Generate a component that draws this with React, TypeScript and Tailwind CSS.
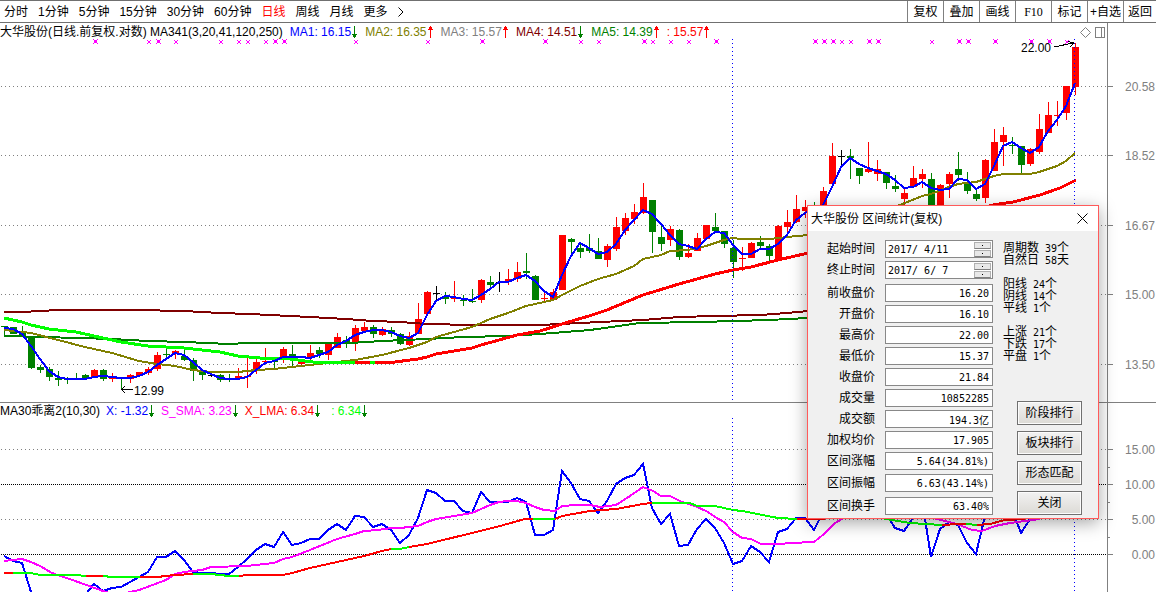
import { useState } from 'react';

type Candle = ['r' | 'g' | 'k', number, number, number, number];

const STEP = 9;
const candleColor = { r: '#ff0000', g: '#008000', k: '#000000' };

// kind, high, body top, body bottom, low
const candles: Candle[] = [
  ['g', 326, 326, 327, 336], ['g', 327, 327, 334, 334], ['g', 326, 333, 336, 337], ['g', 336, 336, 368, 369],
  ['g', 365, 367, 370, 373], ['g', 367, 369, 377, 381], ['g', 371, 378, 380, 386], ['g', 377, 379, 380, 384],
  ['g', 373, 379, 380, 380], ['g', 374, 375, 379, 380], ['r', 369, 370, 377, 378], ['g', 369, 370, 379, 381],
  ['r', 373, 378, 379, 382], ['g', 378, 378, 379, 390], ['r', 374, 375, 379, 383], ['r', 372, 372, 376, 376],
  ['r', 367, 369, 373, 375], ['r', 352, 355, 369, 371], ['g', 348, 354, 355, 357], ['r', 350, 351, 354, 359],
  ['g', 350, 356, 360, 361], ['g', 358, 360, 371, 381], ['g', 370, 372, 375, 380], ['k', 374, 375, 376, 377],
  ['g', 374, 375, 380, 382], ['g', 374, 378, 380, 382], ['r', 368, 376, 378, 380], ['r', 358, 376, 377, 388],
  ['r', 358, 362, 369, 374], ['r', 348, 361, 362, 363], ['g', 359, 361, 362, 368], ['r', 347, 349, 358, 363],
  ['g', 345, 354, 357, 366], ['r', 359, 360, 364, 365], ['r', 345, 353, 358, 362], ['g', 347, 350, 354, 358],
  ['r', 343, 343, 355, 360], ['r', 333, 337, 348, 348], ['g', 336, 340, 343, 348], ['r', 325, 328, 342, 351],
  ['r', 322, 327, 331, 331], ['g', 325, 327, 334, 338], ['r', 327, 329, 335, 336], ['g', 327, 330, 334, 337],
  ['g', 333, 334, 344, 345], ['r', 332, 336, 345, 346], ['r', 303, 319, 334, 334], ['r', 291, 292, 314, 314],
  ['k', 286, 293, 294, 300], ['g', 292, 296, 299, 304], ['r', 281, 297, 299, 302], ['g', 295, 300, 301, 306],
  ['g', 289, 301, 302, 303], ['r', 279, 280, 300, 303], ['g', 276, 282, 285, 288], ['k', 272, 282, 283, 292],
  ['r', 269, 279, 282, 285], ['r', 262, 272, 279, 282], ['g', 253, 271, 273, 279], ['g', 275, 276, 300, 300],
  ['r', 290, 298, 299, 302], ['r', 289, 292, 300, 300], ['r', 235, 235, 290, 290], ['g', 238, 239, 242, 253],
  ['g', 244, 248, 252, 258], ['g', 234, 248, 251, 253], ['g', 238, 251, 259, 259], ['r', 244, 246, 260, 267],
  ['r', 217, 227, 249, 251], ['r', 213, 218, 231, 235], ['r', 204, 212, 219, 224], ['r', 183, 197, 213, 214],
  ['g', 200, 200, 232, 253], ['g', 226, 237, 244, 251], ['r', 226, 229, 240, 246], ['g', 229, 230, 257, 260],
  ['r', 244, 253, 257, 258], ['r', 233, 238, 251, 251], ['r', 225, 225, 239, 239], ['g', 213, 227, 231, 232],
  ['g', 231, 231, 244, 248], ['g', 240, 248, 262, 278], ['r', 247, 258, 259, 271], ['r', 242, 243, 258, 258],
  ['g', 236, 242, 246, 248], ['g', 244, 246, 256, 261], ['r', 225, 226, 260, 260], ['r', 210, 222, 227, 234],
  ['r', 195, 209, 222, 223], ['r', 200, 207, 211, 218], ['g', 202, 207, 212, 214], ['r', 187, 191, 206, 206],
  ['r', 143, 156, 184, 184], ['k', 150, 156, 157, 166], ['g', 149, 156, 158, 179], ['g', 168, 168, 176, 184],
  ['r', 142, 169, 172, 173], ['r', 160, 169, 174, 181], ['g', 172, 172, 183, 189], ['g', 175, 186, 189, 192],
  ['r', 187, 193, 199, 206], ['r', 166, 178, 187, 187], ['r', 169, 174, 179, 188], ['g', 173, 179, 206, 206],
  ['r', 184, 185, 206, 206], ['r', 172, 174, 184, 198], ['g', 152, 169, 175, 181], ['g', 172, 184, 191, 194],
  ['g', 190, 194, 199, 201], ['r', 159, 160, 198, 203], ['r', 129, 142, 171, 171], ['r', 127, 135, 142, 166],
  ['g', 137, 145, 146, 154], ['g', 146, 146, 165, 173], ['r', 148, 149, 164, 166], ['r', 114, 129, 152, 154],
  ['r', 102, 115, 133, 133], ['r', 101, 115, 116, 126], ['r', 86, 86, 113, 120], ['r', 43, 47, 87, 95],
];

const ma1 = [
  328, 329, 334, 346, 359, 371, 377, 379, 379, 379, 377, 376, 377, 378, 378, 376, 372, 365, 359, 353,
  355, 362, 370, 374, 378, 379, 379, 377, 370, 363, 361, 357, 357, 357, 358, 355, 352, 345, 341, 335,
  332, 330, 330, 332, 336, 338, 333, 315, 301, 296, 297, 299, 300, 295, 289, 282, 282, 278, 275, 281,
  291, 297, 275, 256, 243, 248, 254, 252, 244, 230, 220, 210, 214, 224, 235, 244, 246, 249, 239, 232,
  233, 245, 254, 254, 249, 249, 244, 235, 220, 213, 209, 205, 187, 167, 158, 164, 168, 171, 174, 180,
  188, 187, 182, 188, 190, 189, 179, 180, 189, 184, 166, 146, 142, 148, 153, 147, 131, 120, 106, 83,
];

const bias = [
  556, 561, 563, 592, 612, 618, 615, 610, 605, 595, 584, 591, 588, 587, 582, 577, 572, 557, 557, 551,
  560, 572, 573, 573, 574, 574, 567, 559, 550, 544, 547, 532, 545, 543, 539, 539, 530, 524, 530, 516,
  517, 527, 524, 530, 543, 535, 518, 490, 493, 501, 501, 511, 513, 492, 502, 502, 502, 498, 502, 535,
  535, 530, 471, 483, 499, 501, 513, 501, 484, 478, 475, 464, 508, 524, 514, 546, 545, 529, 519, 528,
  543, 564, 561, 546, 552, 562, 532, 529, 518, 518, 530, 512, 500, 490, 485, 490, 495, 500, 514, 528,
  531, 518, 500, 557, 529, 522, 525, 543, 554, 516, 490, 495, 510, 533, 519, 500,
];

const toPoints = (ys: number[]) => ys.map((y, i) => `${i * STEP + 4},${y}`).join(' ');

const mainLines = [
  { color: '#800000', width: 2, points: '4,312 22,312 58,310 135,310 184,311 220,313 250,314 310,317 346,319 373,321 400,322 427,324 472,325 540,325 600,322 643,320 679,317 715,316 760,315 787,313 808,311' },
  { color: '#008000', width: 2, points: '4,336 40,337 80,338 112,339 148,341 185,342 229,344 247,343 350,343 382,341 427,339 463,337 508,336 540,334 590,330 640,323 700,322 769,320 808,318' },
  { color: '#808000', width: 2, points: '4,330 31,333 58,340 85,347 112,353 139,361 157,364 175,366 193,370 211,372 238,372 256,370 274,369 301,366 328,363 355,360 382,355 409,348 427,342 436,337 454,332 472,327 490,319 508,313 526,306 535,304 553,300 562,295 580,286 598,279 616,274 634,266 643,259 661,255 670,251 688,250 706,246 724,240 732,238 742,239 770,239 787,237 808,235 840,220 870,214 900,205 922,196 931,194 949,187 958,184 976,182 994,176 1003,174 1030,174 1039,172 1057,166 1066,161 1075,153' },
  { color: '#00ff00', width: 3, points: '4,318 22,322 31,325 49,329 76,332 121,342 148,346 184,348 220,352 238,356 260,358 290,359 313,362 355,362' },
  { color: '#ff0000', width: 3, points: '355,362 395,362 418,359 427,357 436,354 472,348 481,345 517,335 540,331 575,320 589,316 607,310 643,295 679,284 715,274 733,270 751,267 778,260 808,253 993,205 1013,202 1040,195 1060,188 1076,180' },
  { color: '#00ff00', width: 3, points: '370,362 375,362' },
];

const smaPoints =
  '4,561 13,560 22,559 31,562 40,566 52,573 78,582 103,591 116,595 130,592 139,590 150,586 166,580 175,574 184,572 202,570 211,567 247,566 274,563 283,559 292,557 310,550 337,539 355,534 364,531 378,530 391,528 400,528 418,526 427,522 436,519 460,515 472,513 490,505 499,502 508,501 517,501 526,503 535,507 544,510 555,511 562,506 576,505 590,505 600,507 616,505 630,496 643,487 653,491 661,496 670,496 682,502 695,506 708,512 715,517 724,522 733,532 742,538 751,539 761,544 780,544 790,543 814,542 824,534 835,523 842,519 880,500 937,519 957,524 972,530 982,531 995,526 1010,523 1040,519';

const RED = '#ff0000';
const LIME = '#00ff00';
const lma = [
  { color: RED, points: '4,573 13,573' },
  { color: LIME, points: '13,573 31,573 40,575 76,575 86,576' },
  { color: RED, points: '86,576 103,576' },
  { color: LIME, points: '103,576 112,577 140,577' },
  { color: RED, points: '140,577 157,577 175,575 193,574' },
  { color: LIME, points: '193,574 211,574 229,576 239,576' },
  { color: RED, points: '239,576 247,575 283,575 292,573 310,568 346,560 364,556 382,551 391,549' },
  { color: LIME, points: '391,549 400,549 409,547' },
  { color: RED, points: '409,547 427,544 472,533 500,526 525,519 533,519' },
  { color: LIME, points: '533,519 555,519' },
  { color: RED, points: '555,519 562,516 590,511 616,509 643,504 652,503' },
  { color: LIME, points: '652,503 690,503 697,506 715,506 733,510 742,511 778,518 797,519' },
  { color: RED, points: '797,519 825,519' },
  { color: LIME, points: '870,514 886,519 910,523 942,525' },
  { color: RED, points: '942,525 958,524 966,524' },
  { color: LIME, points: '966,524 977,525' },
  { color: RED, points: '977,525 990,524 1005,520 1025,519' },
];

const strongMarks = [10, 17, 30, 31, 53, 60, 71, 79, 90, 91, 92, 96, 97, 106, 107, 110, 114, 116];
const weakMarks = [16, 19, 24, 26, 27, 29, 39, 47, 64, 66, 72, 74, 76, 93, 94, 103, 118];

const periods = ['分时', '1分钟', '5分钟', '15分钟', '30分钟', '60分钟', '日线', '周线', '月线', '更多'];
const tools = ['复权', '叠加', '画线', 'F10', '标记', '+自选', '返回'];

const priceGrid = [
  { y: 86, label: '20.58' },
  { y: 155, label: '18.52' },
  { y: 225, label: '16.67' },
  { y: 294, label: '15.00' },
  { y: 364, label: '13.50' },
];
const biasGrid = [
  { y: 449, label: '15.00', solid: false },
  { y: 484, label: '10.00', solid: true },
  { y: 519, label: '5.00', solid: false },
  { y: 554, label: '0.00', solid: true },
];

const prices = [
  ['前收盘价', '16.20'],
  ['开盘价', '16.10'],
  ['最高价', '22.00'],
  ['最低价', '15.37'],
  ['收盘价', '21.84'],
  ['成交量', '10852285'],
  ['成交额', '194.3亿'],
  ['加权均价', '17.905'],
  ['区间涨幅', '5.64(34.81%)'],
];
const ranges = [
  ['区间振幅', '6.63(43.14%)'],
  ['区间换手', '63.40%'],
];
const stats = [
  [['周期数', '39', '个'], ['自然日', '58', '天']],
  [['阳线', '24', '个'], ['阴线', '14', '个'], ['平线', '1', '个']],
  [['上涨', '21', '个'], ['下跌', '17', '个'], ['平盘', '1', '个']],
];
const actions = ['阶段排行', '板块排行', '形态匹配', '关闭'];

function Arrow({ up }: { up?: boolean }) {
  return (
    <svg width="7" height="14" viewBox="0 0 7 14" shapeRendering="crispEdges" className={up ? 'text-[#ff0000]' : 'text-[#008000]'}>
      <path d="M3 1h1v12H3z" fill="currentColor" />
      {up ? (
        <path d="M3 1h1v1h1v2h1v1H1V4h1V2h1z" fill="currentColor" />
      ) : (
        <path d="M1 9h5v1H5v2H4v1H3v-1H2v-2H1z" fill="currentColor" />
      )}
    </svg>
  );
}

function Reading({ text, color, up }: { text: string; color: string; up?: boolean }) {
  return (
    <span className="flex items-center">
      <span className={color}>{text}</span>
      <Arrow up={up} />
    </span>
  );
}

function Toolbar() {
  const [period, setPeriod] = useState('日线');
  return (
    <header className="flex h-[23px] items-stretch justify-between border-y border-[#707070]">
      <nav className="flex items-center gap-2.5 pl-1">
        {periods.map((p) => (
          <button key={p} type="button" onClick={() => setPeriod(p)} className={p === period ? 'text-[#ff0000]' : ''}>
            {p}
          </button>
        ))}
        <button type="button" aria-label="展开">
          <svg width="6" height="10" viewBox="0 0 6 10" fill="none" stroke="#000000">
            <path d="M0.500 0.500L5 5L0.500 9.500" />
          </svg>
        </button>
      </nav>
      <div className="flex">
        {tools.map((t) => (
          <button key={t} type="button" className="w-9 border-l border-[#808080] text-center last:w-[33px]">
            {t === 'F10' ? <span className="font-['Liberation_Serif',serif]">{t}</span> : t}
          </button>
        ))}
      </div>
    </header>
  );
}

function PriceChart() {
  return (
    <section className="relative">
      <svg viewBox="0 23 1156 379" className="block h-auto w-full" shapeRendering="crispEdges" fontSize="12">
        {priceGrid.map((g) => (
          <g key={g.label}>
            <path d={`M1 ${g.y}.5H1107`} stroke="#808080" strokeDasharray="1 3" />
            <path d={`M1107 ${g.y}.5H1113`} stroke="#808080" />
            <text x="1155" y={g.y + 5} textAnchor="end" fill="#808080">{g.label}</text>
          </g>
        ))}
        <path d="M1107.5 23V402" stroke="#808080" />

        {strongMarks.map((i) => (
          <g key={i} fill="#ff00ff">
            <rect x={i * STEP + 4} y="40" width="3" height="3" />
            <path d={`M${i * STEP + 3} 39h1v1h3v-1h1v1h-1v3h1v1h-1v-1h-3v1h-1v-1h1v-3h-1z`} />
          </g>
        ))}
        {weakMarks.map((i) => (
          <path key={i} d={`M${i * STEP + 3} 40l4 4m0 -4l-4 4`} stroke="#ff00ff" />
        ))}

        {candles.map(([kind, high, top, bottom, low], i) => (
          <g key={i} fill={candleColor[kind]}>
            <rect x={i * STEP + 4} y={high} width="1" height={low - high} />
            <rect x={i * STEP + 1} y={top} width="7" height={bottom - top} />
          </g>
        ))}

        {mainLines.map((l, i) => (
          <polyline key={i} points={l.points} fill="none" stroke={l.color} strokeWidth={l.width} />
        ))}
        <polyline points={toPoints(ma1)} fill="none" stroke="#0000ff" strokeWidth="2" />

        <path d="M732.5 39V402M1074.5 39V402" stroke="#0000ff" strokeDasharray="1 3" />

        <g fill="none" stroke="#000000">
          <path d="M1054 47L1073 43M1068 41.5L1074 43L1070 47" />
          <path d="M133 389.5H122M125 386L121.500 389.500L125 393" />
        </g>
        <text x="1021" y="52">22.00</text>
        <text x="134" y="395">12.99</text>

        <g fill="none" stroke="#808080">
          <path d="M1080.500 32.500L1085.500 27.500L1090.500 32.500L1085.500 37.500Z" shapeRendering="auto" />
          <path d="M1095.500 27.500H1104.500V37.500H1095.500ZM1101.500 27.500V37.500" />
        </g>
      </svg>
      <div className="absolute left-0 top-0 flex h-[18px] items-center gap-[7px] whitespace-nowrap">
        <span>大华股份(日线.前复权.对数) MA341(3,20,41,120,250)</span>
        <Reading text="MA1: 16.15" color="text-[#0000ff]" />
        <Reading text="MA2: 16.35" color="text-[#808000]" up />
        <Reading text="MA3: 15.57" color="text-[#808080]" up />
        <Reading text="MA4: 14.51" color="text-[#800000]" />
        <Reading text="MA5: 14.39" color="text-[#008000]" up />
        <Reading text=": 15.57" color="text-[#ff0000]" up />
      </div>
    </section>
  );
}

function BiasChart() {
  return (
    <section className="relative border-t border-[#808080]">
      <svg viewBox="0 403 1156 189" className="block h-auto w-full" shapeRendering="crispEdges" fontSize="12">
        {biasGrid.map((g) => (
          <g key={g.label}>
            <path
              d={`M1 ${g.y}.5H1107`}
              stroke={g.solid ? '#000000' : '#808080'}
              strokeDasharray={g.solid ? '1 1' : '1 3'}
            />
            <path d={`M1107 ${g.y}.5H1113`} stroke="#808080" />
            <text x="1155" y={g.y + 5} textAnchor="end" fill="#808080">{g.label}</text>
          </g>
        ))}
        <path d="M1107.5 403V592M1107 467.500H1110M1107 502.500H1110M1107 537.500H1110" stroke="#808080" />
        <polyline points={toPoints(bias)} fill="none" stroke="#0000ff" strokeWidth="2" />
        <polyline points={smaPoints} fill="none" stroke="#ff00ff" strokeWidth="2" />
        {lma.map((l, i) => (
          <polyline key={i} points={l.points} fill="none" stroke={l.color} strokeWidth="2" />
        ))}
        <path d="M732.5 418V592M1074.5 418V592" stroke="#0000ff" strokeDasharray="1 3" />
      </svg>
      <div className="absolute left-0 top-0 flex h-4 items-center gap-1.5 whitespace-nowrap">
        <span>MA30乖离2(10,30)</span>
        <Reading text="X: -1.32" color="text-[#0000ff]" />
        <Reading text="S_SMA: 3.23" color="text-[#ff00ff]" />
        <Reading text="X_LMA: 6.34" color="text-[#ff0000]" />
        <span className="ml-1">
          <Reading text=": 6.34" color="text-[#00ff00]" />
        </span>
      </div>
    </section>
  );
}

function DateRow({ id, label, value }: { id: string; label: string; value: string }) {
  return (
    <div className="flex h-[18px] items-center gap-2.5">
      <label htmlFor={id} className="w-[67px] text-right">{label}</label>
      <div className="flex h-full w-[108px] items-center border border-[#888888] bg-white pr-px">
        <input
          id={id}
          defaultValue={value}
          className="h-full min-w-0 flex-1 whitespace-pre bg-transparent pl-[2px] font-['DejaVu_Sans_Mono',monospace] text-[10px] outline-none"
        />
        <div className="flex w-[17px] flex-col gap-px">
          {['增加', '减少'].map((n) => (
            <button
              key={n}
              type="button"
              aria-label={label + n}
              className="flex h-[7px] items-center justify-center border border-[#b0b0b0] border-b-[#808080] bg-[#e8e8e8]"
            >
              <span className="h-px w-px bg-black" />
            </button>
          ))}
        </div>
      </div>
    </div>
  );
}

function ValueRow({ label, value }: { label: string; value: string }) {
  return (
    <div className="flex h-[18px] items-center gap-2.5">
      <label htmlFor={label} className="w-[67px] text-right">{label}</label>
      <input
        id={label}
        readOnly
        value={value}
        className="h-full w-[108px] border border-[#888888] bg-white pr-[3px] text-right font-['DejaVu_Sans_Mono','Noto_Sans_CJK_SC',monospace] text-[10px] outline-none"
      />
    </div>
  );
}

function StatsDialog({ onClose }: { onClose: () => void }) {
  return (
    <div
      role="dialog"
      aria-label="区间统计"
      className="absolute right-[57px] top-[205px] w-[292px] border border-[#ff5a5a] bg-[#f0f0f0] shadow-[0_4px_16px_rgba(0,0,0,0.35)]"
    >
      <div className="flex h-[25px] items-center justify-between bg-white pl-[3px] pr-2.5">
        <h2>大华股份 区间统计(复权)</h2>
        <button type="button" aria-label="关闭窗口" onClick={onClose}>
          <svg width="11" height="11" viewBox="0 0 11 11" fill="none" stroke="#000000">
            <path d="M0.500 0.500L10.500 10.500M10.500 0.500L0.500 10.500" />
          </svg>
        </button>
      </div>
      <div className="flex gap-2.5 pb-[3px] pt-[9px]">
        <div>
          <div className="flex flex-col gap-[3px]">
            <DateRow id="start" label="起始时间" value="2017/ 4/11" />
            <DateRow id="end" label="终止时间" value="2017/ 6/ 7" />
          </div>
          <div className="mt-[5px] flex flex-col gap-[3px]">
            {prices.map(([label, value]) => (
              <ValueRow key={label} label={label} value={value} />
            ))}
          </div>
          <div className="mt-1 flex flex-col gap-[5px]">
            {ranges.map(([label, value]) => (
              <ValueRow key={label} label={label} value={value} />
            ))}
          </div>
        </div>
        <div className="flex flex-col justify-between">
          <div className="flex flex-col gap-3 pt-0.5 leading-3">
            {stats.map((group, i) => (
              <div key={i}>
                {group.map(([name, count, unit]) => (
                  <p key={name} className="h-3">
                    {name}
                    <span className="whitespace-pre font-['DejaVu_Sans_Mono',monospace] text-[10px]"> {count}</span>
                    {unit}
                  </p>
                ))}
              </div>
            ))}
          </div>
          <div className="flex flex-col gap-1.5 pl-3.5">
            {actions.map((a) => (
              <button
                key={a}
                type="button"
                onClick={a === '关闭' ? onClose : undefined}
                className="h-6 w-[65px] border border-[#707070] bg-linear-to-b from-[#f2f2f2] to-[#dcdad5] shadow-[inset_0_0_0_1px_#fcfcfc]"
              >
                {a}
              </button>
            ))}
          </div>
        </div>
      </div>
    </div>
  );
}

export default function App() {
  const [open, setOpen] = useState(true);
  return (
    <div className="relative min-h-screen overflow-hidden bg-white font-['Liberation_Sans','Noto_Sans_CJK_SC',sans-serif] text-xs text-black">
      <Toolbar />
      <main>
        <PriceChart />
        <BiasChart />
      </main>
      {open && <StatsDialog onClose={() => setOpen(false)} />}
    </div>
  );
}
